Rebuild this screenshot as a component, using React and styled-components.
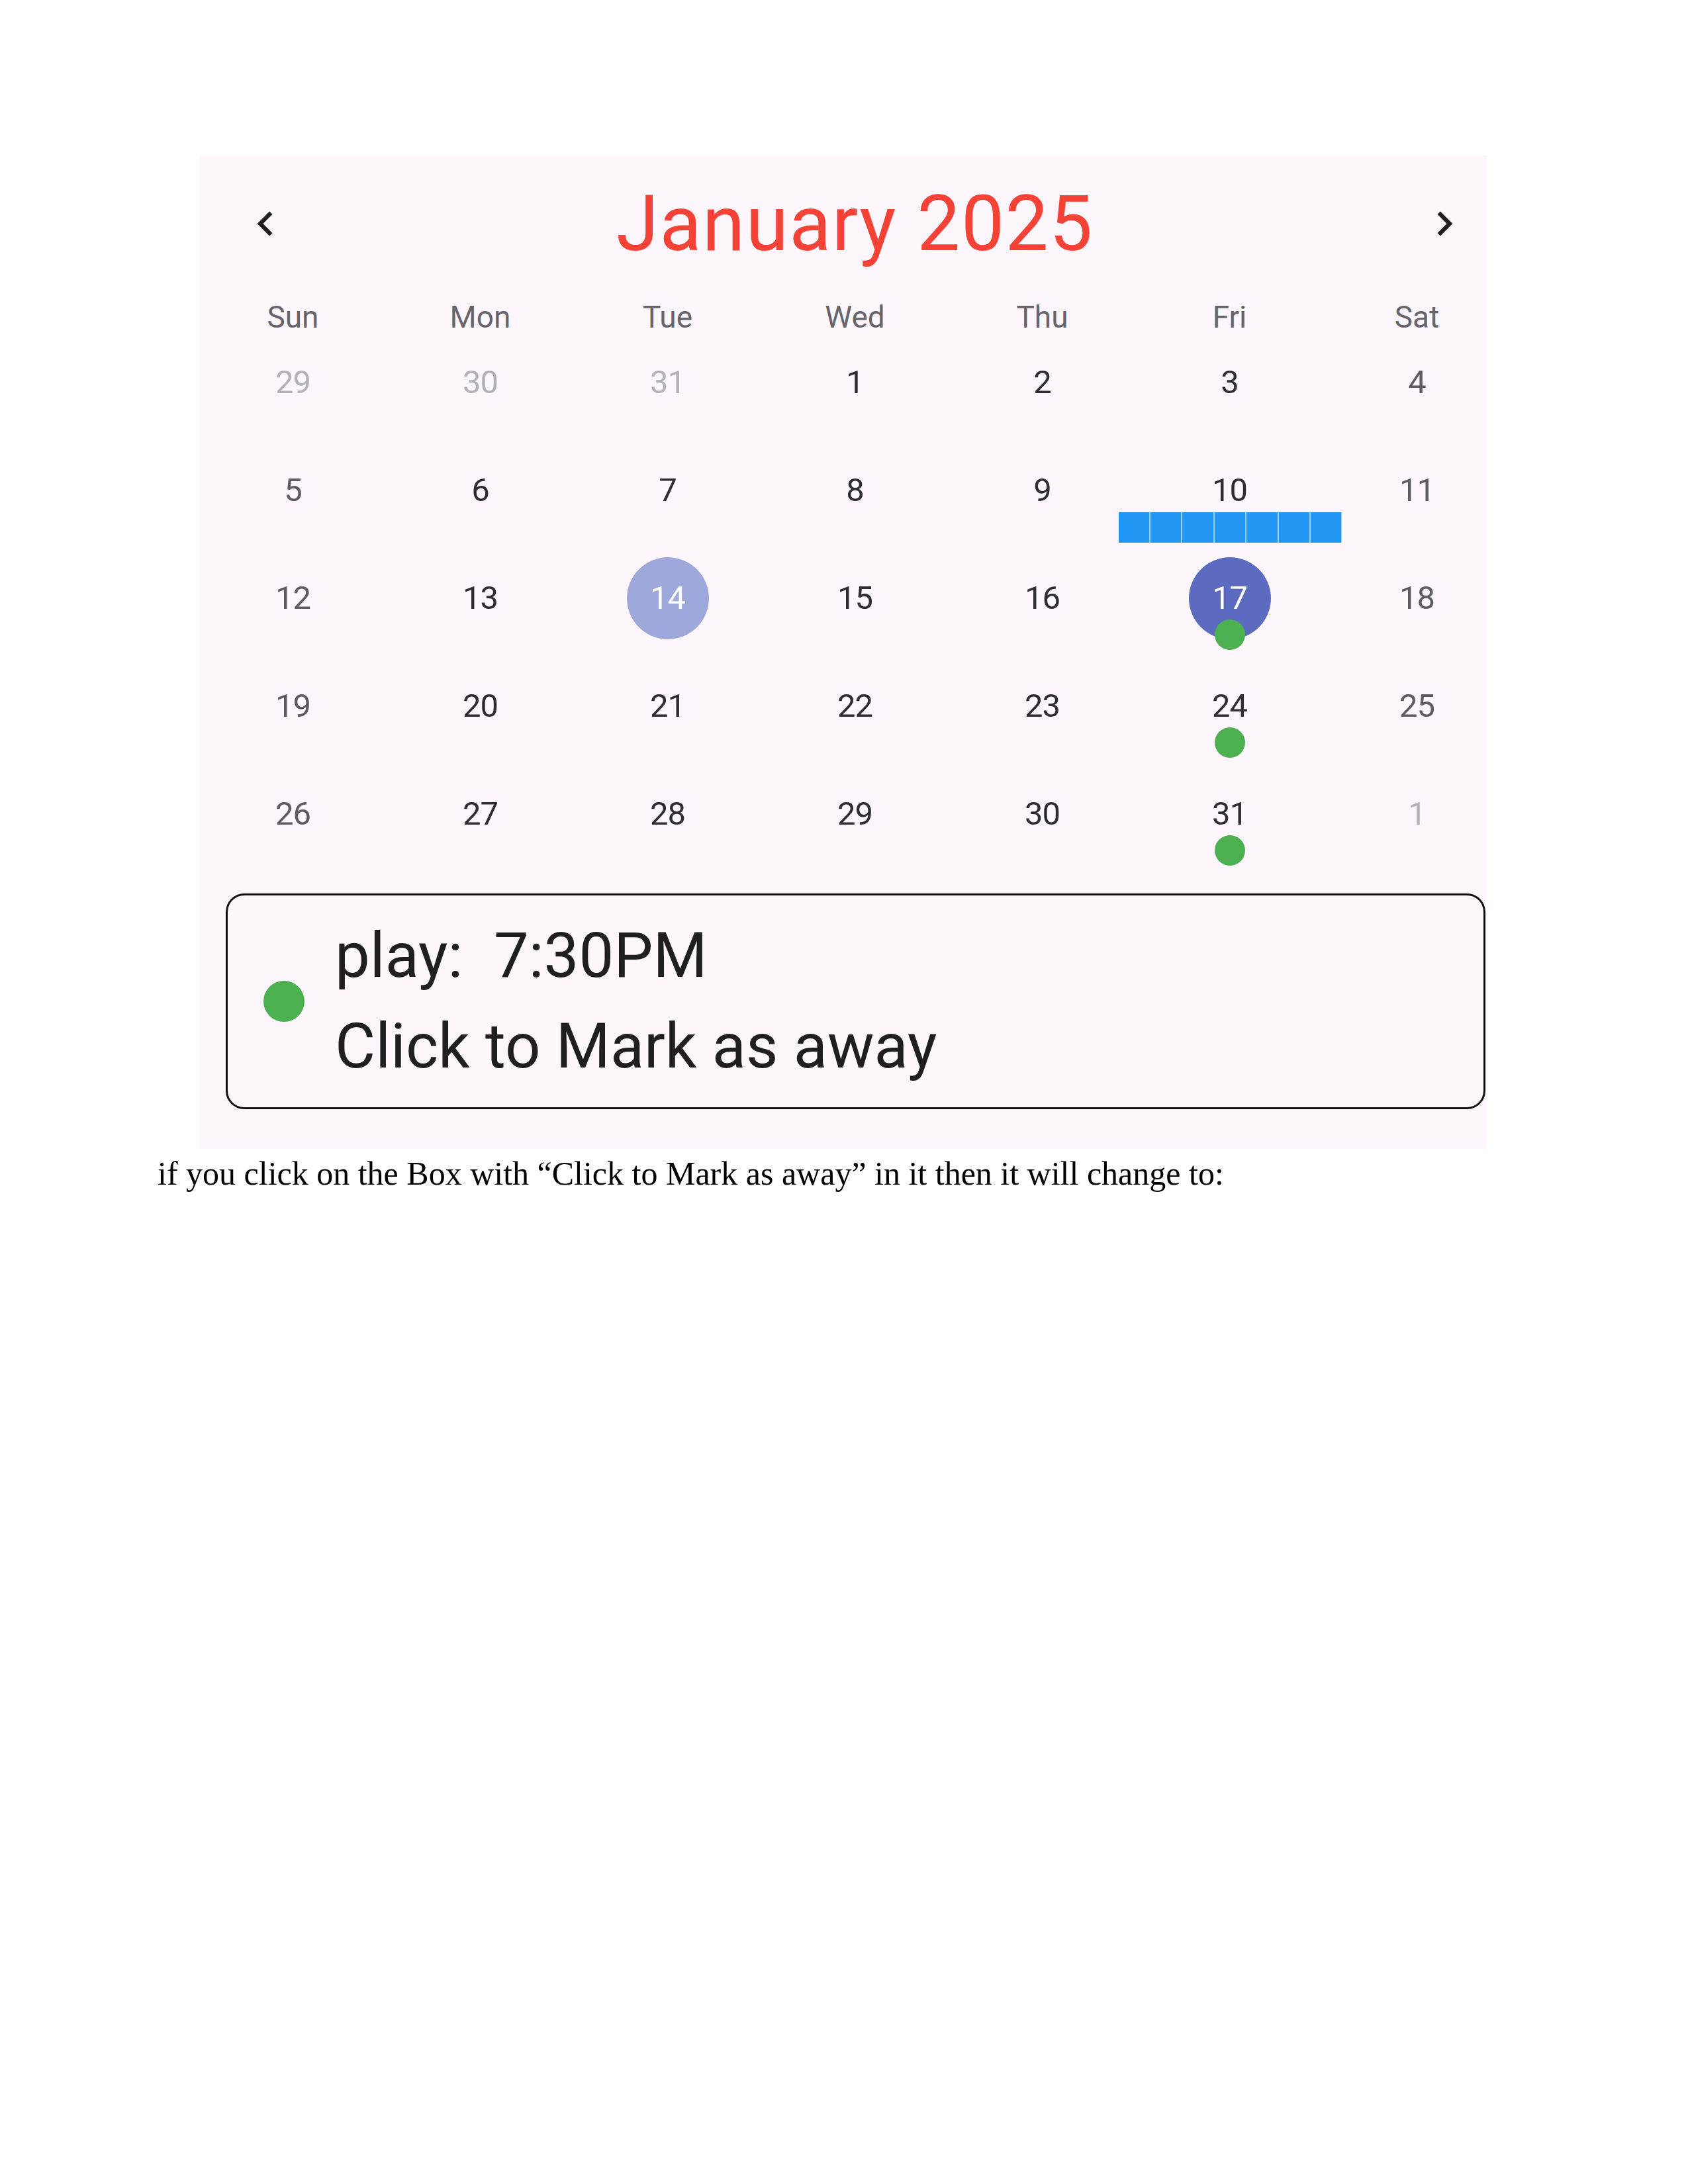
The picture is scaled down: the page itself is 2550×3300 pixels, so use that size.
import React from 'react'
import styled, { createGlobalStyle } from 'styled-components'
import { MdChevronLeft, MdChevronRight } from 'react-icons/md'

const GlobalStyle = createGlobalStyle`
  body {
    margin: 0;
    background: #ffffff;
  }
`

const Page = styled.div`
  width: 2550px;
  min-height: 3300px;
  padding-top: 235px;
  box-sizing: border-box;
  background: #ffffff;
`

const Panel = styled.div`
  width: 1945px;
  margin-left: 301px;
  background: #fdf7fd;
  padding-bottom: 60px;
  font-family: Roboto, "Liberation Sans", sans-serif;
`

const Header = styled.div`
  height: 206px;
  display: flex;
  align-items: center;
  padding: 0 27px 0 63px;
`

const NavButton = styled.div`
  width: 74px;
  height: 74px;
  display: flex;
  align-items: center;
  justify-content: center;
  color: #1d1b20;
  font-size: 74px;
`

const Title = styled.div`
  flex: 1;
  text-align: center;
  color: #f44336;
  font-size: 116px;
  letter-spacing: 1.5px;
  line-height: 1;
`

const Grid = styled.div`
  display: grid;
  grid-template-columns: repeat(7, 283px);
`

const WeekLabel = styled.div`
  height: 55px;
  padding-top: 15px;
  box-sizing: border-box;
  text-align: center;
  font-size: 46px;
  line-height: 46px;
  color: #66636a;
`

const Cell = styled.div`
  position: relative;
  height: 163px;
  display: flex;
  align-items: center;
  justify-content: center;
`

const DayNum = styled.div`
  width: 124px;
  height: 124px;
  border-radius: 50%;
  display: flex;
  align-items: center;
  justify-content: center;
  font-size: 49px;
  letter-spacing: -1px;
  background: ${p => p.$bg || 'transparent'};
  color: ${p => p.$color};
`

const Dot = styled.div`
  position: absolute;
  left: 50%;
  bottom: 3px;
  width: 46px;
  height: 46px;
  margin-left: -23px;
  border-radius: 50%;
  background: #4caf50;
`

const Bar = styled.div`
  position: absolute;
  left: 50%;
  bottom: 2px;
  width: 337px;
  height: 46px;
  margin-left: -168px;
  display: flex;
  gap: 2px;
  background: #9dcef7;
`

const BarSegment = styled.div`
  flex: 1;
  background: #2196f3;
`

const EventBox = styled.div`
  margin: 39px 0 0 40px;
  width: 1903px;
  height: 326px;
  box-sizing: border-box;
  border: 3px solid #111;
  border-radius: 28px;
  display: flex;
  align-items: center;
  padding-left: 54px;
  cursor: pointer;
`

const EventDot = styled.div`
  width: 62px;
  height: 62px;
  border-radius: 50%;
  background: #4caf50;
  margin-right: 46px;
  flex-shrink: 0;
`

const EventText = styled.div`
  font-size: 94px;
  line-height: 137px;
  color: #1f1f22;
  white-space: pre;
`

const Note = styled.p`
  margin: 8px 0 0 238px;
  font-family: "Liberation Serif", "Times New Roman", serif;
  font-size: 50px;
  color: #000;
`

const weekdays = ['Sun', 'Mon', 'Tue', 'Wed', 'Thu', 'Fri', 'Sat']

const days = [
  [29, 30, 31, 1, 2, 3, 4],
  [5, 6, 7, 8, 9, 10, 11],
  [12, 13, 14, 15, 16, 17, 18],
  [19, 20, 21, 22, 23, 24, 25],
  [26, 27, 28, 29, 30, 31, 1],
]

const dotDays = [17, 24, 31]

function isOutside(row, d) {
  return (row === 0 && d > 20) || (row === 4 && d < 10)
}

function dayColor(row, col, d) {
  if (isOutside(row, d)) return '#b3b0b7'
  if (col === 0 || col === 6) return '#5e5b62'
  return '#2f2d33'
}

function DayCell({ row, col, d }) {
  const outside = isOutside(row, d)
  let bg
  let color = dayColor(row, col, d)
  if (!outside && d === 14) { bg = '#9fa8da'; color = '#fff' }
  if (!outside && d === 17) { bg = '#5c6bc0'; color = '#fff' }
  return (
    <Cell>
      <DayNum $bg={bg} $color={color}>{d}</DayNum>
      {!outside && d === 10 && (
        <Bar>
          {Array.from({ length: 7 }).map((_, i) => <BarSegment key={i} />)}
        </Bar>
      )}
      {!outside && dotDays.includes(d) && <Dot />}
    </Cell>
  )
}

export default function App() {
  return (
    <>
      <GlobalStyle />
      <Page>
        <Panel>
          <Header>
            <NavButton><MdChevronLeft /></NavButton>
            <Title>January 2025</Title>
            <NavButton><MdChevronRight /></NavButton>
          </Header>
          <Grid>
            {weekdays.map(w => <WeekLabel key={w}>{w}</WeekLabel>)}
            {days.map((week, r) =>
              week.map((d, c) => <DayCell key={r + '-' + c} row={r} col={c} d={d} />)
            )}
          </Grid>
          <EventBox>
            <EventDot />
            <EventText>{'play:  7:30PM\nClick to Mark as away'}</EventText>
          </EventBox>
        </Panel>
        <Note>if you click on the Box with “Click to Mark as away” in it then it will change to:</Note>
      </Page>
    </>
  )
}
